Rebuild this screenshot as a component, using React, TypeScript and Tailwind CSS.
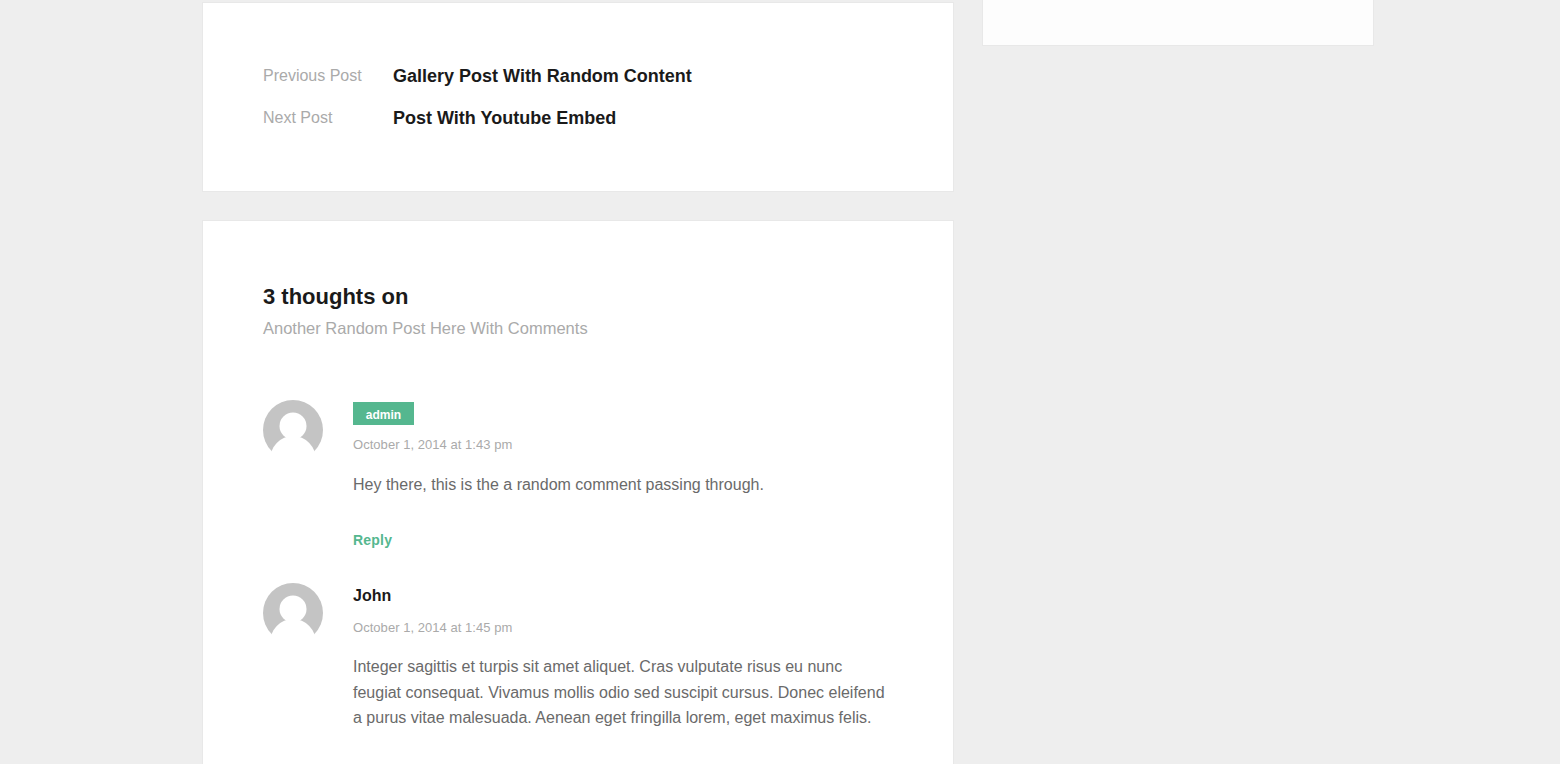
import React from 'react';

const Avatar = () => (
  <svg width="60" height="60" viewBox="0 0 60 60" className="shrink-0 block">
    <circle cx="30" cy="30" r="30" fill="#c4c4c4" />
    <circle cx="30" cy="26" r="13.5" fill="#fff" />
    <ellipse cx="30" cy="60" rx="23" ry="24" fill="#fff" />
    <rect x="0" y="52" width="60" height="8" fill="#fff" />
  </svg>
);

const PostLink = ({ label, title }: { label: string; title: string }) => (
  <div className="flex items-start h-[41.5px]">
    <span className="w-[130px] text-[16px] leading-[26px] text-[#aaaaaa]">{label}</span>
    <span className="text-[18px] leading-[27px] font-bold text-[#1a1a1a]">{title}</span>
  </div>
);

export default function App() {
  return (
    <div className="h-[764px] overflow-hidden bg-[#eeeeee] font-['Liberation_Sans',Arial,sans-serif]">
      <div className="flex items-start gap-[28px] pl-[202px]">
        <div className="w-[752px] shrink-0">
          {/* Prev / next */}
          <div className="mt-[2px] h-[190px] bg-white border border-[#e8e8e8] pt-[60px] pl-[60px]">
            <PostLink label="Previous Post" title="Gallery Post With Random Content" />
            <PostLink label="Next Post" title="Post With Youtube Embed" />
          </div>

          {/* Comments */}
          <div className="mt-[28px] h-[600px] bg-white border border-[#e8e8e8] pt-[63px] px-[60px]">
            <h2 className="text-[22px] leading-[26px] font-bold text-[#1a1a1a]">3 thoughts on</h2>
            <p className="mt-[8px] text-[16.5px] leading-[20px] text-[#aaaaaa]">Another Random Post Here With Comments</p>

            <div className="mt-[62px] flex gap-[30px]">
              <Avatar />
              <div className="pt-[2px]">
                <span className="block w-[61px] h-[23px] bg-[#55b78f] text-center text-[12px] leading-[26px] font-bold text-white">admin</span>
                <p className="mt-[12px] text-[13px] leading-[16px] tracking-[0.04px] text-[#aaaaaa]">October 1, 2014 at 1:43 pm</p>
                <p className="mt-[19px] text-[16px] leading-[25px] text-[#6a6a6a]">Hey there, this is the a random comment passing through.</p>
                <p className="mt-[35px] text-[14px] leading-[16px] tracking-[0.2px] font-bold text-[#55b78f]">Reply</p>
              </div>
            </div>

            <div className="mt-[35px] flex gap-[30px]">
              <Avatar />
              <div>
                <p className="mt-[3px] text-[16px] leading-[20px] font-bold text-[#1a1a1a]">John</p>
                <p className="mt-[14px] text-[13px] leading-[16px] tracking-[0.04px] text-[#aaaaaa]">October 1, 2014 at 1:45 pm</p>
                <p className="mt-[18px] w-[540px] text-[16px] leading-[25.5px] text-[#6a6a6a]">
                  Integer sagittis et turpis sit amet aliquet. Cras vulputate risus eu nunc feugiat consequat. Vivamus mollis odio sed suscipit cursus. Donec eleifend a purus vitae malesuada. Aenean eget fringilla lorem, eget maximus felis.
                </p>
              </div>
            </div>
          </div>
        </div>

        {/* Sidebar tail */}
        <div className="w-[392px] h-[46px] bg-[#fdfdfd] border border-t-0 border-[#e8e8e8]" />
      </div>
    </div>
  );
}
